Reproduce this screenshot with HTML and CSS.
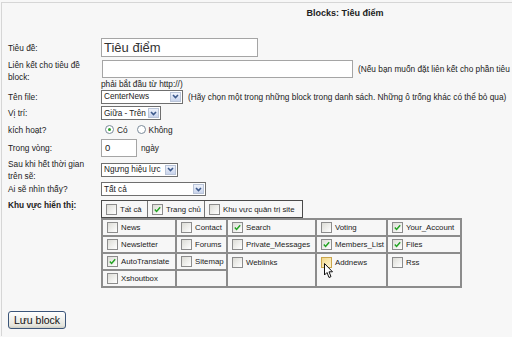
FILE: index.html
```html
<!DOCTYPE html>
<html lang="vi">
<head>
    <meta charset="UTF-8">
    <title>Blocks: Tiêu điểm</title>
    <link rel="stylesheet" href="styles.css">
</head>
<body>
<div class="page">
    <div class="page-title">Blocks: Tiêu điểm</div>

    <div class="form">
        <!-- Tiêu đề -->
        <div class="lbl">Tiêu đề:</div>
        <div class="val"><span class="input input-title">Tiêu điểm</span></div>

        <!-- Liên kết -->
        <div class="lbl lbl-top">Liên kết cho tiêu đề<br>block:</div>
        <div class="val val-top">
            <div class="link-line">
                <span class="input input-link"></span>
                <span class="note">(Nếu bạn muốn đặt liên kết cho phần tiêu</span>
            </div>
            <div class="note-2">phải bắt đầu từ http://)</div>
        </div>

        <!-- Tên file -->
        <div class="lbl">Tên file:</div>
        <div class="val val-row">
            <span class="select sel-file">CenterNews<span class="arrow"><svg width="9" height="9" viewBox="0 0 9 9"><path d="M2 3 L4.5 5.5 L7 3" fill="none" stroke="#3d5a8c" stroke-width="1.6"/></svg></span></span>
            <span class="note">(Hãy chọn một trong những block trong danh sách. Những ô trống khác có thể bỏ qua)</span>
        </div>

        <!-- Vị trí -->
        <div class="lbl">Vị trí:</div>
        <div class="val"><span class="select sel-pos">Giữa - Trên<span class="arrow"><svg width="9" height="9" viewBox="0 0 9 9"><path d="M2 3 L4.5 5.5 L7 3" fill="none" stroke="#3d5a8c" stroke-width="1.6"/></svg></span></span></div>

        <!-- Kích hoạt -->
        <div class="lbl">kích hoạt?</div>
        <div class="val val-row radios">
            <span class="radio on"></span><span class="radio-text">Có</span>
            <span class="radio"></span><span class="radio-text">Không</span>
        </div>

        <!-- Trong vòng -->
        <div class="lbl">Trong vòng:</div>
        <div class="val val-row"><span class="input input-days">0</span><span class="unit">ngày</span></div>

        <!-- Sau khi hết thời gian -->
        <div class="lbl">Sau khi hết thời gian<br>trên sẽ:</div>
        <div class="val"><span class="select sel-after">Ngưng hiệu lực<span class="arrow"><svg width="9" height="9" viewBox="0 0 9 9"><path d="M2 3 L4.5 5.5 L7 3" fill="none" stroke="#3d5a8c" stroke-width="1.6"/></svg></span></span></div>

        <!-- Ai sẽ nhìn thấy -->
        <div class="lbl">Ai sẽ nhìn thấy?</div>
        <div class="val"><span class="select sel-who">Tất cả<span class="arrow"><svg width="9" height="9" viewBox="0 0 9 9"><path d="M2 3 L4.5 5.5 L7 3" fill="none" stroke="#3d5a8c" stroke-width="1.6"/></svg></span></span></div>

        <!-- Khu vực hiển thị -->
        <div class="lbl lbl-top lbl-bold">Khu vực hiển thị:</div>
        <div class="val val-top area">
            <div class="scope">
                <div class="opt opt-all"><span class="cb"></span>Tất cả</div>
                <div class="opt opt-home"><span class="cb on"><svg width="10" height="10" viewBox="0 0 10 10"><path d="M2 5 L4 7.2 L8 2.5" fill="none" stroke="#22a322" stroke-width="1.6"/></svg></span>Trang chủ</div>
                <div class="opt opt-admin"><span class="cb"></span>Khu vực quản trị site</div>
            </div>
            <table class="mods">
                <colgroup>
                    <col class="c1"><col class="c2"><col class="c3"><col class="c4"><col class="c5">
                </colgroup>
                <tr>
                    <td><span class="cb"></span>News</td>
                    <td><span class="cb"></span>Contact</td>
                    <td><span class="cb on"><svg width="10" height="10" viewBox="0 0 10 10"><path d="M2 5 L4 7.2 L8 2.5" fill="none" stroke="#22a322" stroke-width="1.6"/></svg></span>Search</td>
                    <td><span class="cb"></span>Voting</td>
                    <td><span class="cb on"><svg width="10" height="10" viewBox="0 0 10 10"><path d="M2 5 L4 7.2 L8 2.5" fill="none" stroke="#22a322" stroke-width="1.6"/></svg></span>Your_Account</td>
                </tr>
                <tr>
                    <td><span class="cb"></span>Newsletter</td>
                    <td><span class="cb"></span>Forums</td>
                    <td><span class="cb"></span>Private_Messages</td>
                    <td><span class="cb on"><svg width="10" height="10" viewBox="0 0 10 10"><path d="M2 5 L4 7.2 L8 2.5" fill="none" stroke="#22a322" stroke-width="1.6"/></svg></span>Members_List</td>
                    <td><span class="cb on"><svg width="10" height="10" viewBox="0 0 10 10"><path d="M2 5 L4 7.2 L8 2.5" fill="none" stroke="#22a322" stroke-width="1.6"/></svg></span>Files</td>
                </tr>
                <tr>
                    <td><span class="cb on"><svg width="10" height="10" viewBox="0 0 10 10"><path d="M2 5 L4 7.2 L8 2.5" fill="none" stroke="#22a322" stroke-width="1.6"/></svg></span>AutoTranslate</td>
                    <td><span class="cb"></span>Sitemap</td>
                    <td rowspan="2" class="tall"><span class="cb"></span>Weblinks</td>
                    <td rowspan="2" class="tall hover"><span class="cb hot"></span>Addnews
                        <svg class="cursor" width="10" height="16" viewBox="0 0 10 16"><path d="M0.5 0.5 L0.5 12 L3 9.5 L5 14.5 L7 13.6 L5 8.8 L8.5 8.8 Z" fill="#fff" stroke="#111" stroke-width="1"/></svg>
                    </td>
                    <td rowspan="2" class="tall"><span class="cb"></span>Rss</td>
                </tr>
                <tr>
                    <td><span class="cb"></span>Xshoutbox</td>
                    <td></td>
                </tr>
            </table>
        </div>
    </div>

    <button class="save" type="button">Lưu block</button>
</div>
</body>
</html>
```

FILE: styles.css
```css
body {
    margin: 0;
    background-color: #f7f7f7;
    font-family: "Liberation Sans", Arial, sans-serif;
    font-size: 8.3px;
    color: #222222;
}
.page {
    margin: 2px 0 0 1px;
    height: 334px;
    box-sizing: border-box;
    border-top: 1px solid #d6d6d6;
    border-left: 1px solid #d6d6d6;
    padding-left: 6px;
}
.page-title {
    font-weight: bold;
    font-size: 9px;
    line-height: 14px;
    text-align: center;
    padding: 3px 0 16px 170px;
}
/* form laid out as two columns: label / value */
.form {
    display: grid;
    grid-template-columns: 93px 1fr;
    grid-template-rows: 23px 29px 17px 16px 17px 20px 23px 16px auto;
    align-items: center;
}
.lbl {
    line-height: 12px;
    white-space: nowrap;
}
.lbl-top {
    align-self: start;
}
.lbl-bold {
    font-weight: bold;
    padding-top: 2px;
}
.val {
    white-space: nowrap;
}
.val-top {
    align-self: start;
}
.val-row {
    display: flex;
    align-items: center;
}
/* text boxes */
.input {
    display: inline-block;
    box-sizing: border-box;
    background-color: #ffffff;
    border: 1px solid #a5a5a5;
    vertical-align: middle;
}
.input-title {
    width: 157px;
    height: 19px;
    font-size: 13px;
    line-height: 17px;
    padding-left: 2px;
    color: #333;
}
.input-link {
    width: 251px;
    height: 18px;
    margin-left: 1px;
}
.input-days {
    width: 36px;
    height: 18px;
    line-height: 16px;
    padding-left: 3px;
    font-size: 9.5px;
}
.unit {
    margin-left: 4px;
}
.link-line {
    display: flex;
    align-items: center;
    height: 20px;
}
.link-line .note {
    margin-left: 5px;
}
.note-2 {
    line-height: 10px;
}
/* drop downs */
.select {
    display: inline-flex;
    align-items: center;
    justify-content: space-between;
    box-sizing: border-box;
    height: 14px;
    padding: 0 1px 0 2px;
    background-color: #ffffff;
    border: 1px solid #6f6f6f;
    font-size: 8.2px;
}
.arrow {
    display: inline-flex;
    align-items: center;
    justify-content: center;
    width: 11px;
    height: 10px;
    margin-left: 2px;
    box-sizing: border-box;
    border: 1px solid #b9c4d8;
    background: linear-gradient(#eef2fb, #c9d4ec);
}
.sel-file { width: 82px; }
.sel-pos { width: 60px; }
.sel-after { width: 77px; }
.sel-who { width: 105px; }
.sel-file + .note {
    margin-left: 5px;
}
/* radios */
.radios {
    padding-left: 4px;
}
.radio {
    display: inline-block;
    width: 9px;
    height: 9px;
    box-sizing: border-box;
    border: 1px solid #7a8a9a;
    border-radius: 50%;
    background: #ffffff;
    position: relative;
}
.radio.on::after {
    content: "";
    position: absolute;
    left: 2px;
    top: 2px;
    width: 3px;
    height: 3px;
    border-radius: 50%;
    background: #2aa02a;
}
.radio-text {
    margin: 0 9px 0 3px;
}
/* checkboxes */
.cb {
    display: inline-flex;
    align-items: center;
    justify-content: center;
    width: 11px;
    height: 11px;
    box-sizing: border-box;
    border: 1px solid #8c8c8c;
    background: linear-gradient(135deg, #dcdcd6, #ffffff);
    vertical-align: middle;
    margin-right: 3px;
}
.cb svg {
    width: 9px;
    height: 9px;
}
.cb.hot {
    border-color: #c9a54c;
    background: linear-gradient(135deg, #f3d98a, #fdf3d0);
}
.area {
    margin-top: 3px;
}
.scope {
    display: inline-flex;
    height: 18px;
    box-sizing: border-box;
    border: 1px solid #4a4a4a;
    font-size: 7.8px;
}
.opt {
    display: flex;
    align-items: center;
    padding-left: 4px;
    box-sizing: border-box;
    white-space: nowrap;
}
.opt + .opt {
    border-left: 1px solid #777;
}
.opt-all { width: 45px; }
.opt-home { width: 57px; }
.opt-admin { width: 98px; }
/* module grid */
.mods {
    table-layout: fixed;
    width: 361px;
    border-collapse: separate;
    border-spacing: 0;
    border: 1px solid #8c8c8c;
    font-size: 7.8px;
}
.mods col.c1 { width: 74px; }
.mods col.c2 { width: 51px; }
.mods col.c3 { width: 89px; }
.mods col.c4 { width: 71px; }
.mods col.c5 { width: 74px; }
.mods td {
    border: 1px solid #8c8c8c;
    height: 17px;
    padding: 0 0 0 4px;
    white-space: nowrap;
    overflow: hidden;
    vertical-align: middle;
    box-sizing: border-box;
}
.mods td.tall {
    vertical-align: top;
    padding-top: 3px;
}
.mods td.hover {
    position: relative;
}
.cursor {
    position: absolute;
    left: 7px;
    top: 9px;
}
/* submit button */
.save {
    margin-top: 23px;
    width: 58px;
    height: 18px;
    padding: 0;
    font-family: "Liberation Sans", Arial, sans-serif;
    font-size: 10.5px;
    color: #111;
    border: 1px solid #3b5579;
    border-radius: 3px;
    background: linear-gradient(#ffffff, #e4e4dc 85%, #cfcfc4);
}
```
